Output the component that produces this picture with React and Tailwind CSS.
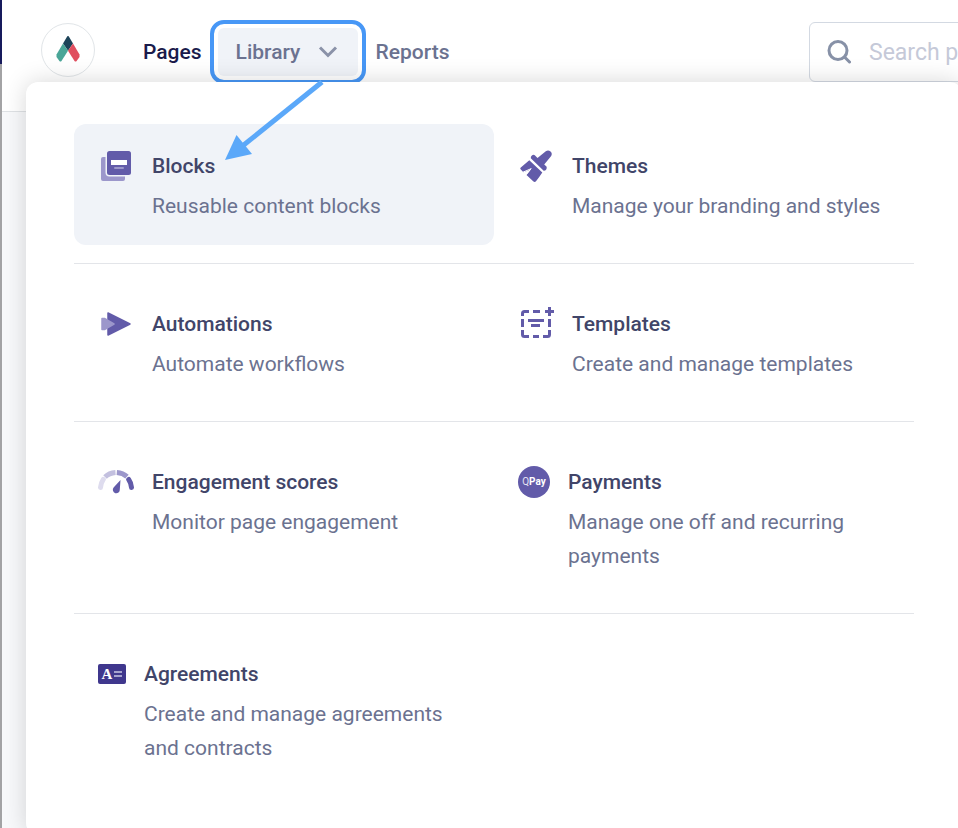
const LogoIcon = () => (
  <svg className="h-7 w-6" viewBox="0 0 24 28" aria-hidden="true">
    <path d="M11.300 0.300Q12 -0.300 12.700 0.300L17 7.500L12 14.800L7 7.500Z" fill="#1d4459" />
    <path d="M7 7.500L12 14.800L5.500 25Q4.500 26.200 3.400 25L0.500 21V18.500Z" fill="#4aa698" />
    <path d="M17 7.500L23.500 18.500V21L20.600 25Q19.500 26.200 18.500 25L12 14.800Z" fill="#e04f5f" />
  </svg>
);

const ChevronIcon = () => (
  <svg className="h-3 w-5" viewBox="0 0 20 12" fill="none" stroke="#8a92a8" strokeWidth={3} aria-hidden="true">
    <path d="M2 1.500L10 9.500L18 1.500" />
  </svg>
);

const SearchIcon = () => (
  <svg className="h-6 w-6 shrink-0" viewBox="0 0 24 24" fill="none" stroke="#8791a7" strokeWidth={3} aria-hidden="true">
    <circle cx="11" cy="10.500" r="9" />
    <path strokeLinecap="round" d="M18 17.500L22.500 22" />
  </svg>
);

const BlocksIcon = () => (
  <svg className="h-9 w-9" viewBox="0 0 36 36" aria-hidden="true">
    <path d="M7.500 9H5a2 2 0 0 0-2 2v20a2 2 0 0 0 2 2h20a2 2 0 0 0 2-2v-2.500H11.500a4 4 0 0 1-4-4Z" fill="#9c97cb" />
    <rect x="9" y="3" width="24" height="24" rx="2.500" fill="#625ba9" />
    <rect x="13" y="12" width="16" height="5" fill="#fff" />
    <rect x="16" y="19" width="10" height="2" rx="1" fill="#9c97cb" />
  </svg>
);

const ThemesIcon = () => (
  <svg className="h-9 w-9" viewBox="0 0 36 36" fill="#625ba9" aria-hidden="true">
    <path d="M12.800 10.200A2.800 2.800 0 0 1 16.800 7.200L19.500 10L27.800 3.200A3.700 3.700 0 0 1 33 8.300L26.200 16.500L28.500 18.600A3 3 0 0 1 25.700 22.800Z" />
    <path d="M11.300 12.300L24.300 24.600Q21.500 29 17.800 33.500Q16.500 34.500 15.200 33.200L8.500 27L12.800 21.600L5.400 24.200L2.600 21.300Q1.700 20.200 2.800 19.500Z" />
    <path d="M5 24.200L13.200 20.600L8.200 26.500" stroke="#fff" strokeWidth={1} fill="none" />
  </svg>
);

const AutomationsIcon = () => (
  <svg className="h-9 w-9" viewBox="0 0 36 36" strokeLinejoin="round" aria-hidden="true">
    <path d="M10 7L32 18L10 29Z" fill="#625ba9" stroke="#625ba9" strokeWidth={1.500} />
    <path d="M4 12.500H6.500L16 18L6.500 23.500H4Z" fill="#9c97cb" stroke="#9c97cb" strokeWidth={1.500} />
  </svg>
);

const TemplatesIcon = () => (
  <svg className="h-9 w-9" viewBox="0 0 36 36" fill="none" stroke="#625ba9" strokeWidth={3} aria-hidden="true">
    <path d="M4.500 10V7.500a2 2 0 0 1 2-2H11M15 5.500h7M4.500 13v8M4.500 24v4.500a2 2 0 0 0 2 2H11M15 30.500h6M25 30.500h4.500a2 2 0 0 0 2-2V24M31.500 13v8" />
    <path d="M27 5.500h9M31.500 1v9" />
    <path d="M10 14.500h16M13 19.500h9" />
  </svg>
);

const ScoresIcon = () => (
  <svg className="h-9 w-9" viewBox="0 0 36 36" fill="none" strokeWidth={5} aria-hidden="true">
    <path d="M5.300 15.300Q2.800 19 2.500 23.500" stroke="#dedcee" strokeLinecap="round" />
    <path d="M7 13Q11 9 17.500 8.500" stroke="#c3c0df" />
    <path d="M18.800 8.500Q25 9 29 12.700" stroke="#9c97cb" />
    <path d="M30.700 15.500Q33.200 19 33.500 23.500" stroke="#625ba9" strokeLinecap="round" />
    <path d="M22.500 16L21.800 25.500A3.500 3.500 0 1 1 15.600 23.600Z" fill="#625ba9" />
  </svg>
);

const PaymentsIcon = () => (
  <span className="flex h-8 w-8 items-center justify-center rounded-full bg-[#625ba9] text-[10px] text-[#e4e2f2]">
    Q<span className="font-bold text-white">Pay</span>
  </span>
);

const AgreementsIcon = () => (
  <span className="flex h-5 w-7 items-center justify-center gap-0.5 rounded-xs bg-[#3f378d] font-['Liberation_Serif',serif] text-[15px] font-bold text-white">
    A
    <svg className="h-2 w-2" viewBox="0 0 8 8" stroke="#c9c6e4" strokeWidth={1.500} aria-hidden="true">
      <path d="M0 2h8M0 6h8" />
    </svg>
  </span>
);

const rows = [
  [
    { title: 'Blocks', text: 'Reusable content blocks', icon: BlocksIcon, active: true },
    { title: 'Themes', text: 'Manage your branding and styles', icon: ThemesIcon },
  ],
  [
    { title: 'Automations', text: 'Automate workflows', icon: AutomationsIcon },
    { title: 'Templates', text: 'Create and manage templates', icon: TemplatesIcon },
  ],
  [
    { title: 'Engagement scores', text: 'Monitor page engagement', icon: ScoresIcon },
    { title: 'Payments', text: 'Manage one off and recurring payments', icon: PaymentsIcon },
  ],
  [{ title: 'Agreements', text: 'Create and manage agreements and contracts', icon: AgreementsIcon }],
];

const MenuItem = ({ item }) => {
  const Icon = item.icon;

  return (
    <a
      href="#"
      className={`flex gap-[18px] rounded-xl px-6 pt-[25px] pb-[22px] leading-[34px] ${item.active ? 'bg-[#f0f3f8]' : ''}`}
    >
      <span className="flex h-[34px] shrink-0 items-center">
        <Icon />
      </span>
      <span className="min-w-0">
        <span className="block font-medium text-[#414569]">{item.title}</span>
        <span className="mt-1.5 block text-[#6b7290]">{item.text}</span>
      </span>
    </a>
  );
};

const LibraryMenu = () => (
  <div className="absolute top-[82px] left-6 -right-1 rounded-xl bg-white px-12 pt-[42px] pb-12 shadow-[0_0_24px_rgba(0,0,0,0.16)]">
    {rows.map((row, i) => (
      <div
        key={row[0].title}
        className={`grid grid-cols-2 ${i > 0 ? 'pt-[18px]' : ''} ${i < rows.length - 1 ? 'border-b border-[#e3e5e9] pb-[18px]' : ''}`}
      >
        {row.map((item) => (
          <MenuItem key={item.title} item={item} />
        ))}
      </div>
    ))}
    <svg className="pointer-events-none absolute -top-1 left-[196px] h-[84px] w-[104px]" viewBox="0 0 104 84" aria-hidden="true">
      <path d="M100 4L18 70" stroke="#5ba8f9" strokeWidth={5} />
      <path d="M3 82L14.500 57L30 76Z" fill="#5ba8f9" />
    </svg>
  </div>
);

const App = () => (
  <div className="flex h-screen overflow-hidden bg-[#f8f9fb] font-[Roboto,sans-serif] text-[21px]">
    <div className="flex w-0.5 shrink-0 flex-col bg-[#a3a3a5]">
      <div className="h-16 bg-[#171a5c]" />
    </div>
    <div className="relative min-w-0 flex-1">
      <header className="flex h-28 items-start border-b border-[#dfe2e5] bg-white pl-[39px]">
        <a
          href="#"
          aria-label="Home"
          className="mt-[23px] flex h-[54px] w-[54px] shrink-0 items-center justify-center rounded-full border border-[#e1e5e8]"
        >
          <LogoIcon />
        </a>
        <nav className="mt-7 ml-12 flex h-12 shrink-0 items-center font-medium text-[#6b7290]">
          <a href="#" className="pt-0.5 text-[#1a1b4b]">Pages</a>
          <button
            type="button"
            aria-expanded="true"
            className="ml-4 flex h-12 w-[140px] items-center justify-between rounded-md bg-[#f0f3f8] pr-5 pl-[18px] outline-4 outline-offset-4 outline-[#4797f6]"
          >
            <span className="pt-0.5">Library</span>
            <ChevronIcon />
          </button>
          <a href="#" className="ml-[18px] pt-0.5">Reports</a>
        </nav>
        <label className="mt-[22px] -mr-[151px] ml-auto flex h-[60px] w-[300px] shrink-0 items-center gap-[18px] rounded-md border border-[#d3d9e2] px-[17px]">
          <SearchIcon />
          <input
            type="text"
            aria-label="Search pages"
            placeholder="Search pages"
            className="w-full bg-transparent pt-0.5 text-[23px] outline-none placeholder:text-[#c5c9d8]"
          />
        </label>
      </header>
      <LibraryMenu />
    </div>
  </div>
);

export default App;
